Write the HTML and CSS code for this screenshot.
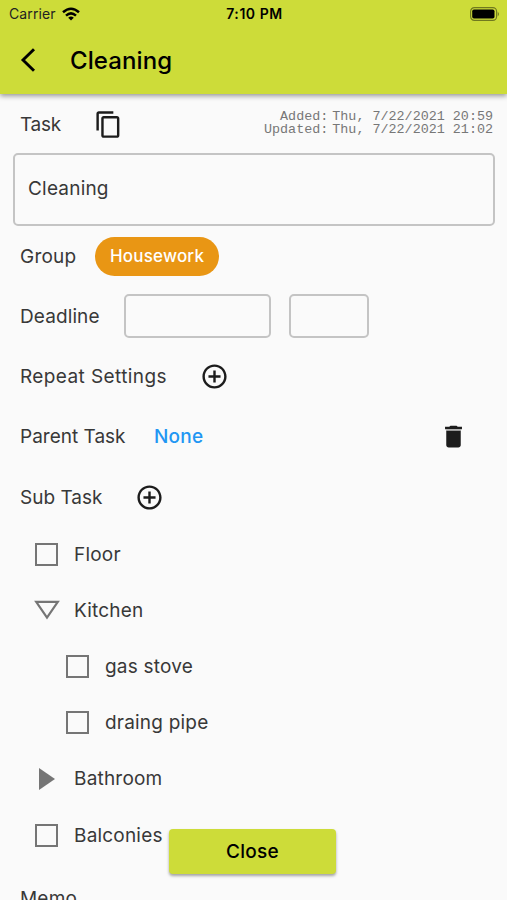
FILE: index.html
```html
<!DOCTYPE html>
<html lang="en">
<head>
<meta charset="utf-8">
<title>Cleaning</title>
<link rel="stylesheet" href="styles.css">
</head>
<body>
<div class="screen">
  <header class="header">
    <div class="status">
      <div class="carrier"><span class="carrier-name">Carrier</span>
        <svg class="wifi" viewBox="0 0 18 14"><g fill="none" stroke="#000" stroke-width="2.5"><path d="M1 5.2Q9-1.8 17 5.2"/><path d="M4 8.6Q9 4.2 14 8.6"/></g><path d="M6.2 10.7Q9 8.5 11.8 10.7L9 13.6Z"/></svg>
      </div>
      <span class="time">7:10 PM</span>
      <svg class="battery" viewBox="0 0 30 14"><rect x=".6" y=".6" width="26" height="12.8" rx="3.8" fill="none" stroke="#000" stroke-opacity=".45" stroke-width="1.2"/><rect x="2.2" y="2.4" width="22.3" height="9.2" rx="1.8"/><path d="M27.8 4.7Q30 7 27.8 9.3Z" fill-opacity=".5"/></svg>
    </div>
    <div class="appbar">
      <svg class="back" viewBox="0 0 16 26"><path d="M14 2.2L3 13L14 23.8" fill="none" stroke="#000" stroke-width="2.9"/></svg>
      <h1 class="title">Cleaning</h1>
    </div>
  </header>
  <main class="content">
    <div class="row">
      <span class="w-task">Task</span>
      <svg class="icon copy" viewBox="0 0 24 24"><path d="M16 1H4c-1.1 0-2 .9-2 2v14h2V3h12V1zm3 4H8c-1.1 0-2 .9-2 2v14c0 1.1.9 2 2 2h11c1.1 0 2-.9 2-2V7c0-1.1-.9-2-2-2zm0 16H8V7h11v14z"/></svg>
      <div class="dates">
        <span>Added:</span><span>Thu, 7/22/2021 20:59</span>
        <span>Updated:</span><span>Thu, 7/22/2021 21:02</span>
      </div>
    </div>
    <div class="field name">Cleaning</div>
    <div class="row">
      <span class="w-group">Group</span>
      <span class="chip">Housework</span>
    </div>
    <div class="row">
      <span class="w-deadline">Deadline</span>
      <div class="field date"></div>
      <div class="field clock"></div>
    </div>
    <div class="row">
      <span class="w-repeat">Repeat Settings</span>
      <svg class="icon add" viewBox="0 0 24 24"><path d="M13 7h-2v4H7v2h4v4h2v-4h4v-2h-4V7zm-1-5C6.48 2 2 6.48 2 12s4.48 10 10 10 10-4.48 10-10S17.52 2 12 2zm0 18c-4.41 0-8-3.59-8-8s3.59-8 8-8 8 3.59 8 8-3.59 8-8 8z"/></svg>
    </div>
    <div class="row">
      <span class="w-parent">Parent Task</span>
      <span class="none">None</span>
      <svg class="icon trash" viewBox="0 0 24 24"><path d="M6 19c0 1.1.9 2 2 2h8c1.1 0 2-.9 2-2V7H6v12z"/><path d="M19 4h-3.5l-1-1h-5l-1 1H5v2h14V4z"/><path d="M6 6h12v1H6z" fill="#aaa"/></svg>
    </div>
    <div class="row">
      <span class="w-sub">Sub Task</span>
      <svg class="icon add" viewBox="0 0 24 24"><path d="M13 7h-2v4H7v2h4v4h2v-4h4v-2h-4V7zm-1-5C6.48 2 2 6.48 2 12s4.48 10 10 10 10-4.48 10-10S17.52 2 12 2zm0 18c-4.41 0-8-3.59-8-8s3.59-8 8-8 8 3.59 8 8-3.59 8-8 8z"/></svg>
    </div>
    <ul class="tree">
      <li class="item"><span class="mark"><i class="box"></i></span>Floor</li>
      <li class="item"><span class="mark"><svg class="open" viewBox="0 0 26 20"><path d="M2.2 1.8H23.8L13 17.6Z" fill="none" stroke="#757575" stroke-width="2.2"/></svg></span>Kitchen</li>
      <li class="item nested"><span class="mark"><i class="box"></i></span>gas stove</li>
      <li class="item nested"><span class="mark"><i class="box"></i></span>draing pipe</li>
      <li class="item"><span class="mark"><svg class="closed" viewBox="0 0 16 22"><path d="M0 0L16 11L0 22Z" fill="#757575"/></svg></span>Bathroom</li>
      <li class="item"><span class="mark"><i class="box"></i></span>Balconies</li>
    </ul>
    <div class="row memo"><span>Memo</span></div>
  </main>
  <button class="close">Close</button>
</div>
</body>
</html>
```
FILE: styles.css
```css
* { box-sizing: border-box; }
body { margin: 0; background: #fafafa; color: #383838; font-family: Inter, "Liberation Sans", sans-serif; font-size: 19px; letter-spacing: .2px; }
.screen { position: relative; width: 507px; height: 900px; overflow: hidden; }
.header { position: relative; height: 94px; background: #cddc39; color: #000; box-shadow: 0 2px 5px rgba(0,0,0,.4); }
.status { display: grid; grid-template-columns: 1fr auto 1fr; align-items: center; height: 27px; padding: 0 7px 0 9px; }
.carrier { display: flex; align-items: center; gap: 6px; font-size: 14px; color: #222; letter-spacing: .1px; }
.wifi { width: 18px; height: 14px; }
.time { font-size: 14px; font-weight: 600; letter-spacing: .55px; }
.battery { width: 30px; height: 14px; justify-self: end; }
.appbar { display: flex; align-items: center; height: 66px; padding-left: 20px; }
.back { width: 16px; height: 26px; }
.title { margin: 0 0 0 34px; font-size: 24px; font-weight: 500; letter-spacing: .1px; }
.row { display: flex; align-items: center; height: 60.2px; padding-left: 20px; white-space: nowrap; }
.icon { flex: none; width: 29px; height: 29px; fill: #1c1c1c; }
.w-task { width: 74px; letter-spacing: -.3px; }
.w-group { width: 75px; }
.w-deadline { width: 104px; letter-spacing: .1px; }
.w-repeat { width: 180px; letter-spacing: .4px; }
.w-parent { width: 134px; letter-spacing: 0; }
.w-sub { width: 115px; letter-spacing: 0; }
.dates { display: grid; grid-template-columns: auto auto; column-gap: 4px; margin: -2px 14px 0 auto; font: 13.4px/13px "Liberation Mono", monospace; letter-spacing: 0; color: #777; text-align: right; }
.field { border: 2px solid #c4c4c4; border-radius: 5px; }
.name { display: flex; align-items: center; height: 73px; margin: -1px 12px 0 13px; padding: 0 0 2px 13px; }
.chip { display: flex; align-items: center; justify-content: center; width: 124px; height: 39px; border-radius: 20px; background: #e99614; color: #fff; font-size: 17px; font-weight: 500; }
.date { width: 147px; height: 44px; }
.clock { width: 80px; height: 44px; margin-left: 18px; }
.none { color: #2196f3; font-weight: 500; }
.trash { margin: 0 39px 0 auto; }
.tree { list-style: none; margin: -1px 0 0; padding: 0; }
.item { display: flex; align-items: center; height: 56.2px; padding-left: 33px; }
.nested { padding-left: 64px; }
.mark { display: flex; align-items: center; justify-content: center; width: 27px; height: 27px; margin-right: 14px; }
.box { width: 23px; height: 23px; border: 2px solid #757575; }
.open { width: 26px; height: 20px; }
.closed { width: 16px; height: 22px; }
.memo { margin-top: 5px; }
.close { position: absolute; left: 169px; top: 829px; width: 167px; height: 45px; border: 0; padding: 0; border-radius: 4px; background: #cddc39; color: #000; font: 500 19px Inter, sans-serif; letter-spacing: .3px; box-shadow: 0 2px 3px rgba(0,0,0,.35); }
```
